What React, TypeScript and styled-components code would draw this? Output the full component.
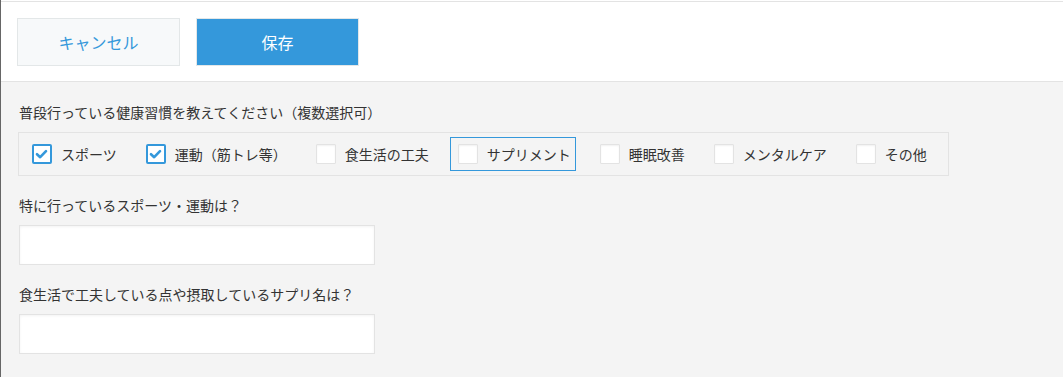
import React from "react";
import styled, { createGlobalStyle } from "styled-components";

const GlobalStyle = createGlobalStyle`
  html, body {
    margin: 0;
    padding: 0;
    background: #f4f4f4;
  }
  body {
    font-family: "Noto Sans CJK JP", "Noto Sans", sans-serif;
    color: #333;
  }
`;

const Page = styled.div`
  min-height: 377px;
  border-left: 1px solid #666;
  background: #f4f4f4;
`;

const Header = styled.div`
  display: flex;
  gap: 16px;
  padding: 18px 0 15px 16px;
  background: linear-gradient(
    to bottom,
    #fff 0,
    #fff 1px,
    #e3e3e3 1px,
    #e3e3e3 2px,
    #fff 2px
  );
  border-bottom: 1px solid #e3e3e3;
`;

const Button = styled.button<{ $primary?: boolean }>`
  box-sizing: border-box;
  width: 163px;
  height: 48px;
  margin: 0;
  border: 1px solid #e3e7e8;
  background: ${(p) => (p.$primary ? "#3498db" : "#f7f9fa")};
  color: ${(p) => (p.$primary ? "#fff" : "#3498db")};
  font-family: "Noto Sans CJK JP", sans-serif;
  font-size: 16px;
  cursor: pointer;
`;

const Body = styled.div`
  padding: 20px 0 0 17px;
  display: flex;
  flex-direction: column;
`;

const Field = styled.div`
  display: flex;
  flex-direction: column;
  align-items: flex-start;
  gap: 10px;
  margin-bottom: 19px;
`;

const Label = styled.div`
  font-size: 14px;
  line-height: 20px;
  color: #333;
  padding-left: 1px;
`;

const Group = styled.div`
  box-sizing: border-box;
  display: inline-flex;
  align-items: center;
  height: 44px;
  padding: 0 0 0 5px;
  border: 1px solid #e3e3e3;
`;

const Item = styled.label<{ $focused?: boolean }>`
  box-sizing: border-box;
  display: flex;
  align-items: center;
  gap: 9px;
  height: 34px;
  padding: 0 4px 0 7px;
  margin-right: 16px;
  border: 1px solid ${(p) => (p.$focused ? "#3498db" : "transparent")};
  font-size: 14px;
  color: #333;
  white-space: nowrap;
`;

const Box = styled.span<{ $checked?: boolean }>`
  box-sizing: border-box;
  width: 20px;
  height: 20px;
  display: flex;
  align-items: center;
  justify-content: center;
  background: #fff;
  border-radius: ${(p) => (p.$checked ? "2px" : "1px")};
  border: ${(p) => (p.$checked ? "2px solid #3498db" : "1px solid #e3e3e3")};
  box-shadow: ${(p) => (p.$checked ? "none" : "inset 0 1px 2px rgba(0,0,0,0.06)")};
`;

const TextInput = styled.input`
  box-sizing: border-box;
  width: 356px;
  height: 40px;
  margin: 0 0 0 1px;
  border: 1px solid #e3e3e3;
  background: #fff;
  box-shadow: inset 0 1px 3px rgba(0, 0, 0, 0.05);
  outline: none;
  font-size: 14px;
`;

const options: { label: string; checked?: boolean; focused?: boolean }[] = [
  { label: "スポーツ", checked: true },
  { label: "運動（筋トレ等）", checked: true },
  { label: "食生活の工夫" },
  { label: "サプリメント", focused: true },
  { label: "睡眠改善" },
  { label: "メンタルケア" },
  { label: "その他" },
];

const Check = () => (
  <svg width="16" height="16" viewBox="0 0 16 16">
    <path
      d="M3 8.2 L6.2 11.2 L12 5.2"
      fill="none"
      stroke="#3498db"
      strokeWidth="2.6"
      strokeLinecap="round"
      strokeLinejoin="round"
    />
  </svg>
);

export default function App() {
  return (
    <Page>
      <GlobalStyle />
      <Header>
        <Button>キャンセル</Button>
        <Button $primary>保存</Button>
      </Header>
      <Body>
        <Field>
          <Label>普段行っている健康習慣を教えてください（複数選択可）</Label>
          <Group>
            {options.map((o) => (
              <Item key={o.label} $focused={o.focused}>
                <Box $checked={o.checked}>{o.checked && <Check />}</Box>
                {o.label}
              </Item>
            ))}
          </Group>
        </Field>
        <Field>
          <Label>特に行っているスポーツ・運動は？</Label>
          <TextInput type="text" />
        </Field>
        <Field>
          <Label>食生活で工夫している点や摂取しているサプリ名は？</Label>
          <TextInput type="text" />
        </Field>
      </Body>
    </Page>
  );
}
